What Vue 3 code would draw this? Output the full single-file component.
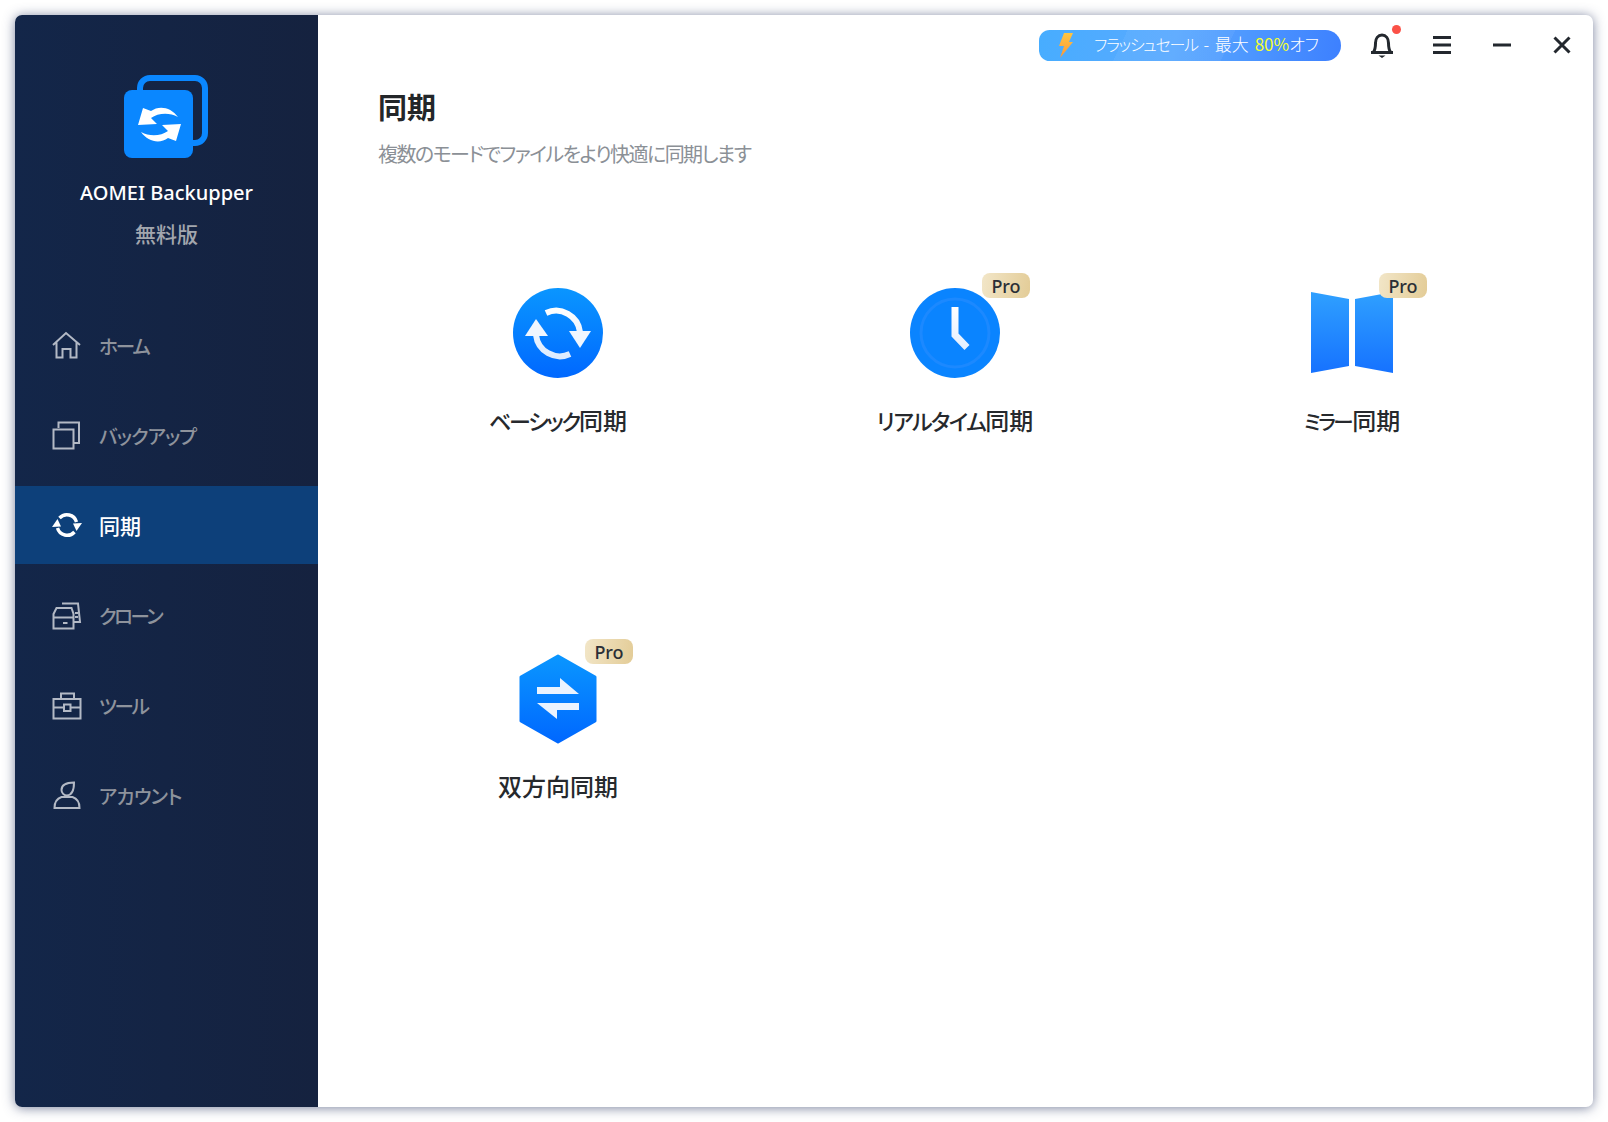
<script setup>
const nav = [
  { label: 'ホーム', ls: -2.1, d: 'M1 15 L14 3 L28 15 M4.5 12.5 V27.5 H10.5 V19 H18.5 V27.5 H24.5 V12.5' },
  { label: 'バックアップ', ls: -0.9, d: 'M1.5 9.5 H21.5 V28.5 H1.5 Z M6.5 8 V2.5 H27 V23 H22' },
  { label: '同期', ls: 0, active: true },
  { label: 'クローン', ls: -2.5, d: 'M1.5 28.5 V14 L4.5 8 H19.5 L21.5 14 V28.5 Z M1.5 17.5 H21.5 M11 23 H15.5 M10 3.5 H26 L28 22 H22 M23 13 H26 M23 17 H26' },
  { label: 'ツール', ls: -2.2, d: 'M1.5 9 H28.5 V28.5 H1.5 Z M9 9 V3.5 H22 V9 M1.5 17.5 H12 M19 17.5 H28.5 M12 14.5 H18.5 V21 H12 Z' },
  { label: 'アカウント', ls: -0.7, d: 'M9.5 10 C9.5 5 13 2.5 22 2.5 C22 9 20 15 15 15.5 C12 15.5 9.5 13 9.5 10 Z M2.5 28 C2.5 23 5 18.5 9.5 17 H20.5 C25 18.5 27.5 23 27.5 28 Z' }
]
</script>

<template>
  <div class="window">
    <aside class="sidebar">
      <svg class="logo" viewBox="0 0 84 83" width="84" height="83">
        <rect x="16" y="3" width="65" height="65" rx="10" fill="none" stroke="#0a87ff" stroke-width="6" />
        <rect x="0" y="15" width="69" height="68" rx="8" fill="#0a87ff" />
        <g fill="#fff">
          <path d="M54 42 C47 32 35 30 27 36 L19 33 L14 50 L33 49 L27 43 C34 38 45 37 54 42 Z" />
          <path d="M54 42 C47 32 35 30 27 36 L19 33 L14 50 L33 49 L27 43 C34 38 45 37 54 42 Z" transform="rotate(180 35.5 49.5)" />
        </g>
      </svg>
      <div class="brand">AOMEI Backupper</div>
      <div class="edition">無料版</div>
      <nav class="nav">
        <div v-for="item in nav" :key="item.label" class="nav-item" :class="{ active: item.active }">
          <svg v-if="item.active" class="nav-icon" viewBox="0 0 30 30" width="30" height="30">
            <path d="M7.5 8 A10 10 0 0 1 24.5 12 M22.5 22 A10 10 0 0 1 5.5 18" fill="none" stroke="#fff" stroke-width="3.4" />
            <polygon points="21,13.5 30,13 24.5,21" fill="#fff" />
            <polygon points="9,16.5 0,17 5.5,9" fill="#fff" />
          </svg>
          <svg v-else class="nav-icon" viewBox="0 0 30 30" width="30" height="30">
            <path :d="item.d" fill="none" stroke="#b3b9c5" stroke-width="2" />
          </svg>
          <span class="nav-label" :style="{ letterSpacing: item.ls + 'px' }">{{ item.label }}</span>
        </div>
      </nav>
    </aside>

    <main class="main">
      <header class="topbar">
        <div class="flash">
          <svg class="bolt" viewBox="0 0 16 25" width="16" height="25">
            <defs>
              <linearGradient id="boltGrad" x1="0" y1="0" x2="0" y2="1">
                <stop offset="0" stop-color="#ffc640" />
                <stop offset="1" stop-color="#f9963a" />
              </linearGradient>
            </defs>
            <polygon points="6,0 15,0 11,9 15,9 2,25 6,13 1,13" fill="url(#boltGrad)" />
          </svg>
          <span class="flash-text"><span class="flash-kana">フラッシュセール</span> - 最大 <em>80%</em>オフ</span>
        </div>
        <button class="tool">
          <svg viewBox="0 0 24 26" width="24" height="26">
            <path d="M3.5 20 C5.5 17 5.5 15 5.5 11 C5.5 6.5 8 3 12 3 C16 3 18.5 6.5 18.5 11 C18.5 15 18.5 17 20.5 20" fill="none" stroke="#23282e" stroke-width="3" />
            <path d="M1 20.5 H23" stroke="#23282e" stroke-width="3" />
            <path d="M8.5 23.5 H15.5 L12 26 Z" fill="#23282e" />
          </svg>
          <span class="dot"></span>
        </button>
        <button class="tool">
          <svg viewBox="0 0 18 18" width="18" height="18">
            <path d="M0 1.5 H18 M0 9 H18 M0 16.5 H18" stroke="#23282e" stroke-width="3" />
          </svg>
        </button>
        <button class="tool">
          <svg viewBox="0 0 18 18" width="18" height="18">
            <path d="M0 9 H18" stroke="#23282e" stroke-width="2.8" />
          </svg>
        </button>
        <button class="tool">
          <svg viewBox="0 0 18 18" width="18" height="18">
            <path d="M1.5 1.5 L16.5 16.5 M16.5 1.5 L1.5 16.5" stroke="#23282e" stroke-width="3" />
          </svg>
        </button>
      </header>

      <section class="heading">
        <h1>同期</h1>
        <p>複数のモードでファイルをより快適に同期します</p>
      </section>

      <svg class="defs" width="0" height="0">
        <defs>
          <linearGradient id="blue" x1="0" y1="0" x2="0" y2="1">
            <stop offset="0" stop-color="#0a96ff" />
            <stop offset="1" stop-color="#0068ff" />
          </linearGradient>
          <linearGradient id="panel" x1="0" y1="0" x2="0" y2="1">
            <stop offset="0" stop-color="#2fa0ff" />
            <stop offset="1" stop-color="#1672ff" />
          </linearGradient>
          <linearGradient id="whiteBlue" gradientUnits="userSpaceOnUse" x1="0" y1="19" x2="0" y2="70">
            <stop offset="0" stop-color="#ffffff" />
            <stop offset="1" stop-color="#dcebff" />
          </linearGradient>
        </defs>
      </svg>

      <section class="grid">
        <div class="card">
          <div class="icon">
            <svg viewBox="0 0 90 90" width="90" height="90">
              <circle cx="45" cy="45" r="45" fill="url(#blue)" />
              <path d="M33 25 A24 24 0 0 1 67 44 M23 47 A24 24 0 0 0 57 66" fill="none" stroke="url(#whiteBlue)" stroke-width="6" />
              <polygon points="56,43 78,43 67,60" fill="#f0f6ff" />
              <polygon points="12,48 35,48 23,31" fill="#f0f6ff" />
            </svg>
          </div>
          <div class="label"><span class="kana ls-basic">ベーシック</span>同期</div>
        </div>

        <div class="card">
          <div class="icon">
            <svg viewBox="0 0 90 90" width="90" height="90">
              <circle cx="45" cy="45" r="45" fill="#0a84ff" />
              <circle cx="45" cy="45" r="34" fill="none" stroke="#1c89ff" stroke-width="3" />
              <path d="M45 19 V47 L57 59.5" fill="none" stroke="url(#whiteBlue)" stroke-width="7" />
            </svg>
            <span class="pro">Pro</span>
          </div>
          <div class="label"><span class="kana ls-real">リアルタイム</span>同期</div>
        </div>

        <div class="card">
          <div class="icon">
            <svg viewBox="0 0 82 82" width="82" height="82">
              <polygon points="0,0 38,7 38,74 0,81" fill="url(#panel)" />
              <polygon points="44,7 82,0 82,81 44,74" fill="url(#panel)" />
            </svg>
            <span class="pro">Pro</span>
          </div>
          <div class="label"><span class="kana ls-mirror">ミラー</span>同期</div>
        </div>

        <div class="card">
          <div class="icon">
            <svg viewBox="0 0 78 90" width="78" height="90">
              <polygon points="39,2 76,23 76,67 39,88 2,67 2,23" fill="url(#blue)" stroke="url(#blue)" stroke-width="3" stroke-linejoin="round" />
              <polygon points="18,33 41,33 41,24 60,40 18,40" fill="#eaf3ff" />
              <polygon points="18,49 60,49 60,56 38,56 38,65" fill="#eaf3ff" />
            </svg>
            <span class="pro">Pro</span>
          </div>
          <div class="label">双方向同期</div>
        </div>
      </section>
    </main>
  </div>
</template>

<style scoped>
.window {
  display: flex;
  width: 1578px;
  height: 1092px;
  margin: 15px;
  border-radius: 7px;
  overflow: hidden;
  background: #fff;
  box-shadow: 0 1px 12px rgba(60, 72, 112, 0.68);
  font-family: "Noto Sans CJK JP", "Noto Sans", sans-serif;
}
.sidebar {
  flex: none;
  width: 303px;
  padding-top: 60px;
  display: flex;
  flex-direction: column;
  align-items: center;
  background: linear-gradient(90deg, #132649, #15223f);
}
.logo {
  display: block;
  margin-left: -2px;
}
.brand {
  margin-top: 20px;
  font-family: "Noto Sans", sans-serif;
  font-size: 20px;
  font-weight: 500;
  line-height: 30px;
  color: #fff;
}
.edition {
  margin-top: 10px;
  font-size: 21px;
  font-weight: 500;
  line-height: 30px;
  color: #a2a6ae;
}
.nav {
  width: 100%;
  margin-top: 58px;
  display: flex;
  flex-direction: column;
  gap: 12px;
}
.nav-item {
  height: 78px;
  display: flex;
  align-items: center;
  padding-left: 37px;
  gap: 17px;
  color: #8e939c;
}
.nav-item.active {
  background: #0d407a;
  color: #fff;
}
.nav-icon {
  flex: none;
}
.nav-label {
  font-size: 19.5px;
  font-weight: 500;
  font-feature-settings: "palt";
}
.nav-item.active .nav-label {
  font-size: 21px;
}
.main {
  flex: 1;
  min-width: 0;
}
.topbar {
  height: 60px;
  display: flex;
  justify-content: flex-end;
  align-items: center;
  padding-right: 1px;
}
.flash {
  width: 302px;
  height: 31px;
  margin-right: 11px;
  display: flex;
  align-items: center;
  padding-left: 19px;
  border-radius: 11px 16px 16px 11px;
  background:
    linear-gradient(115deg, transparent 28%, rgba(255, 255, 255, 0.05) 28%, rgba(255, 255, 255, 0.05) 62%, transparent 62%),
    linear-gradient(100deg, #47adff, #5aa9ff 45%, #3d80ff);
  color: #fff;
  box-sizing: border-box;
}
.bolt {
  flex: none;
}
.flash-text {
  margin-left: 20px;
  font-size: 17px;
  font-weight: 300;
  line-height: 29px;
  padding-bottom: 2px;
  word-spacing: 2px;
  font-feature-settings: "palt";
  white-space: pre;
}
.flash-kana {
  font-size: 16px;
  letter-spacing: -1.3px;
}
.flash-text em {
  font-style: normal;
  font-weight: 400;
  color: #f4ff2e;
}
.tool {
  position: relative;
  width: 60px;
  height: 60px;
  flex: none;
  padding: 0;
  border: 0;
  background: none;
  display: flex;
  align-items: center;
  justify-content: center;
}
.dot {
  position: absolute;
  top: 10px;
  left: 40px;
  width: 9px;
  height: 9px;
  border-radius: 50%;
  background: #fb5147;
}
.heading {
  padding: 11px 0 0 60px;
}
.heading h1 {
  margin: 0;
  font-size: 29px;
  font-weight: 700;
  line-height: 40px;
  color: #232629;
}
.heading p {
  margin: 13px 0 0;
  font-size: 20px;
  line-height: 30px;
  letter-spacing: -1.55px;
  font-feature-settings: "palt";
  color: #8b9096;
}
.defs {
  position: absolute;
}
.grid {
  display: grid;
  grid-template-columns: repeat(3, 397px);
  grid-auto-rows: 366px;
  margin-top: 119px;
  padding-left: 41.5px;
}
.card {
  display: flex;
  flex-direction: column;
  align-items: center;
}
.icon {
  position: relative;
  width: 90px;
  height: 90px;
  display: flex;
  align-items: center;
  justify-content: center;
}
.pro {
  position: absolute;
  top: -15px;
  left: 72px;
  width: 48px;
  height: 25px;
  border-radius: 8px;
  background: linear-gradient(100deg, #f2e6c8, #e3cc97);
  color: #2b2f36;
  font-family: "Noto Sans", sans-serif;
  font-size: 18px;
  font-weight: 500;
  line-height: 27px;
  text-align: center;
}
.label {
  margin-top: 27px;
  font-size: 24px;
  font-weight: 500;
  line-height: 30px;
  font-feature-settings: "palt";
  color: #26292d;
}
.kana {
  font-size: 22px;
}
.ls-basic {
  letter-spacing: -2.2px;
}
.ls-real {
  letter-spacing: -1.5px;
}
.ls-mirror {
  font-size: 20.5px;
  letter-spacing: -2.5px;
  padding-right: 1px;
}
</style>

<style>
html, body {
  background: #fff;
}
</style>
